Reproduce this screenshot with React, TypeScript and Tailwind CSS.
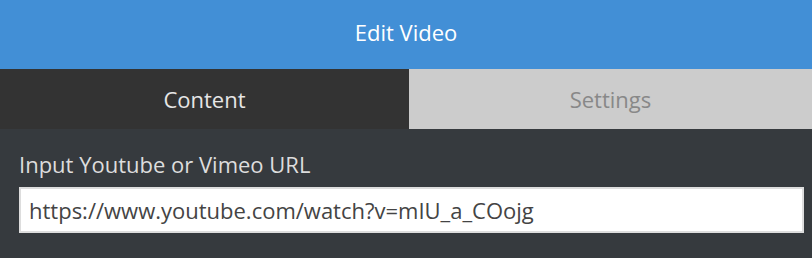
export default function App() {
  return (
    <div className="w-[812px] h-[258px] bg-[#363a3e] font-['Open_Sans',sans-serif] flex flex-col">
      <div className="h-[69px] bg-[#428fd6] flex items-center justify-center text-white text-[22px] pb-[4px]">
        Edit Video
      </div>
      <div className="flex h-[60px]">
        <div className="w-[409px] bg-[#333333] text-[#e6e6e6] text-[22px] flex items-center justify-center">
          Content
        </div>
        <div className="flex-1 bg-[#cccccc] text-[#888888] text-[22px] flex items-center justify-center">
          Settings
        </div>
      </div>
      <div className="px-[19px] pt-[20px]">
        <div className="text-[#dddddd] text-[22px] leading-[30px]">Input Youtube or Vimeo URL</div>
        <input
          className="mt-[8px] w-[785px] h-[46px] bg-white border-2 border-[#dddddd] px-[8px] text-[22px] text-[#444444] outline-none"
          defaultValue="https://www.youtube.com/watch?v=mIU_a_COojg"
        />
      </div>
    </div>
  )
}
